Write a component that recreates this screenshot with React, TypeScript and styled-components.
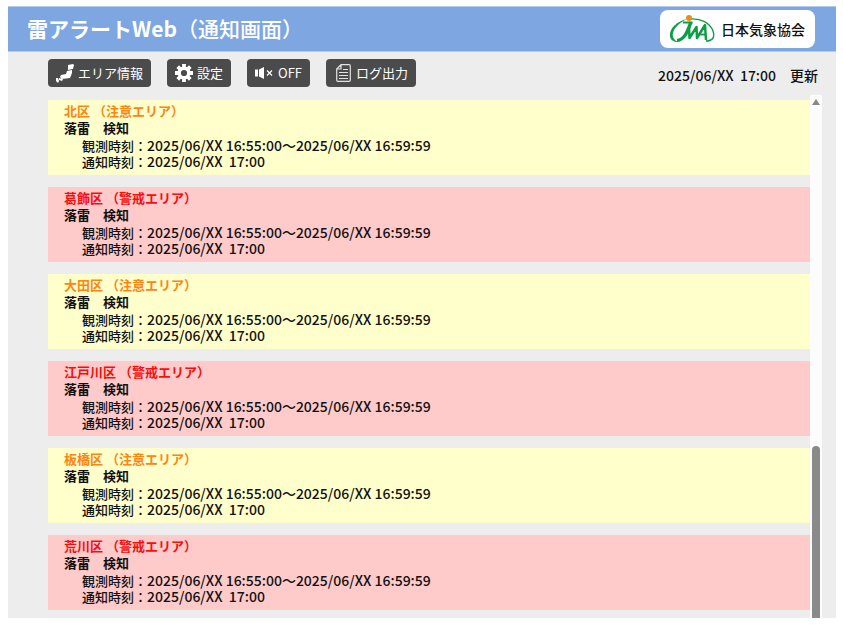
import React from "react";
import styled, { createGlobalStyle } from "styled-components";

const GlobalStyle = createGlobalStyle`
  * { box-sizing: border-box; }
  body {
    margin: 0;
    background: #fff;
    color: #111;
    font-family: "Noto Sans CJK JP", "Noto Sans", sans-serif;
    font-size: 13px;
    font-weight: 500;
  }
`;

const Page = styled.div`
  height: 100vh;
  padding: 6px 7px 9px 8px;
`;

const Screen = styled.main`
  height: 100%;
  display: flex;
  flex-direction: column;
  background: #ededed;
  overflow: hidden;
`;

const Header = styled.header`
  display: flex;
  flex: none;
  align-items: center;
  justify-content: space-between;
  height: 46px;
  padding: 0 21px 2px 19px;
  background: #7ea6e0;
  border-top: 1px solid #b4cbee;
  border-bottom: 1px solid #b4cbee;
`;

const Title = styled.h1`
  margin: 0;
  color: #fff;
  font-size: 21px;
  line-height: 30px;
  font-weight: 500;
  white-space: nowrap;
`;

const Product = styled.span`
  font-weight: 700;
`;

const Brand = styled.a`
  display: flex;
  align-items: center;
  gap: 5px;
  height: 38px;
  padding: 0 10px 0 9px;
  margin-top: 2px;
  border-radius: 8px;
  background: #fff;
  color: #111;
  font-size: 14px;
  text-decoration: none;
  white-space: nowrap;
`;

const Toolbar = styled.div`
  display: flex;
  flex: none;
  align-items: flex-start;
  justify-content: space-between;
  height: 43px;
  padding: 7px 18px 0 40px;
`;

const Buttons = styled.div`
  display: flex;
  gap: 16px;
`;

const ToolButton = styled.button<{ $inset?: boolean }>`
  display: flex;
  align-items: center;
  gap: ${(p) => (p.$inset ? 5 : 4)}px;
  height: 28px;
  padding: 0 8px 0 ${(p) => (p.$inset ? 10 : 8)}px;
  border: 0;
  border-radius: 4px;
  background: #4b4b4b;
  color: #fff;
  font: 400 13px/20px "Noto Sans CJK JP", sans-serif;
  white-space: nowrap;
  cursor: pointer;
`;

const Updated = styled.time`
  padding-top: 6px;
  font-size: 14px;
  line-height: 20px;
  white-space: pre;
`;

const Body = styled.div`
  display: flex;
  flex: 1;
  min-height: 0;
  padding: 0 14px 0 40px;
`;

const List = styled.ul`
  flex: 1;
  display: flex;
  flex-direction: column;
  gap: 12px;
  margin: 0;
  padding: 5px 0 0;
  list-style: none;
  overflow: hidden;
`;

type Level = "caution" | "warning";

const Card = styled.li<{ $level: Level }>`
  flex: none;
  height: 75px;
  padding: 3px 16px;
  background: ${(p) => (p.$level === "caution" ? "#ffffcb" : "#ffcaca")};
`;

const Area = styled.h2<{ $level: Level }>`
  margin: 0;
  color: ${(p) => (p.$level === "caution" ? "#ff8412" : "#f80d0d")};
  font-size: 13px;
  line-height: 16px;
  font-weight: 700;
`;

const Status = styled.p`
  margin: 0;
  line-height: 17px;
  font-weight: 700;
`;

const Times = styled.dl`
  margin: 0;
  padding: 1px 0 0 18px;
`;

const TimeRow = styled.div`
  display: flex;
  align-items: baseline;
  height: 16px;
  line-height: 16px;
  white-space: pre;
`;

const TimeLabel = styled.dt`
  margin: 0;
`;

const TimeValue = styled.dd`
  margin: 0;
  font-size: 14px;
`;

const Track = styled.div`
  display: flex;
  flex-direction: column;
  align-items: center;
  flex: none;
  width: 12px;
  background: #fcfcfc;
`;

const ScrollUp = styled.button`
  display: flex;
  justify-content: center;
  flex: none;
  width: 12px;
  height: 14px;
  padding: 4px 0 0;
  border: 0;
  background: none;
`;

const ThumbSpace = styled.div`
  flex: 337;
`;

const Thumb = styled.div`
  flex: 172;
  width: 8px;
  border-radius: 4px 4px 0 0;
  background: #8a8a8a;
`;

const JwaLogo = () => (
  <svg width="47" height="30" viewBox="0 0 47 30" aria-hidden="true">
    <path d="M9 28C-1 28-1 18 5 12C9 8 13 6 18 5C10 9 5 14 4 19C3 23 5 26 9 28z" fill="#0b9f45" />
    <g fill="none" stroke="#0b9f45" strokeLinejoin="round">
      <path d="M21 5C32 4 41 9 44 17C46 23 44 27 37 27" strokeWidth="1.4" />
      <path d="M22 8C19 16 16 26 8 26.5" strokeWidth="3.4" />
      <path d="M14 8.5H23.5" strokeWidth="2" />
      <path d="M20 13L20.5 24L27.5 13L28 24L36 11L37 26" strokeWidth="2.5" />
      <path d="M31 20.5H37" strokeWidth="1.8" />
    </g>
    <circle cx="20" cy="4" r="3" fill="#f08a1d" />
  </svg>
);

const MapIcon = () => (
  <svg width="18" height="19" viewBox="0 0 18 19" fill="#fff" aria-hidden="true">
    <path d="M12 1l5-1 1 1-1 4-5 1zM11 7l5-1v3l-2 5-8 1-2-2 1-2 5-1zM3 14l4 1-1 2-3-1zM0 14h2l1 3-1 2-2-2z" />
  </svg>
);

const GearIcon = () => (
  <svg width="18" height="18" viewBox="0 0 18 18" aria-hidden="true">
    <path d="M9 0V4M9 14V18M0 9H4M14 9H18M2.7 2.7L5.5 5.5M12.5 12.5L15.3 15.3M2.7 15.3L5.5 12.5M12.5 5.5L15.3 2.7" stroke="#fff" strokeWidth="3.8" />
    <circle cx="9" cy="9" r="4.8" fill="none" stroke="#fff" strokeWidth="3.4" />
  </svg>
);

const MuteIcon = () => (
  <svg width="19" height="12" viewBox="0 0 19 12" aria-hidden="true">
    <path d="M0 2.5h3v7H0zM4 2.5l5-2.5v12L4 9.5z" fill="#fff" />
    <path d="M12 3.5l5 5M17 3.5l-5 5" stroke="#fff" strokeWidth="1.2" />
  </svg>
);

const LogIcon = () => (
  <svg width="15" height="18" viewBox="0 0 15 18" fill="none" stroke="#e2e2e2" aria-hidden="true">
    <path d="M5 .7H13Q14.3.7 14.3 2V16Q14.3 17.3 13 17.3H2Q.7 17.3.7 16V5zM5 .7V5H.7" strokeWidth="1.2" />
    <path d="M7 5.5H12M3 8.5H12M3 11.5H12M3 14.5H12" />
  </svg>
);

const alerts: { area: string; level: Level }[] = [
  { area: "北区", level: "caution" },
  { area: "葛飾区", level: "warning" },
  { area: "大田区", level: "caution" },
  { area: "江戸川区", level: "warning" },
  { area: "板橋区", level: "caution" },
  { area: "荒川区", level: "warning" },
];

const levelNames = { caution: "注意エリア", warning: "警戒エリア" };

export default function App() {
  return (
    <Page>
      <GlobalStyle />
      <Screen>
        <Header>
          <Title><Product>雷アラートWeb</Product>（通知画面）</Title>
          <Brand href="#"><JwaLogo />日本気象協会</Brand>
        </Header>
        <Toolbar>
          <Buttons>
            <ToolButton type="button"><MapIcon />エリア情報</ToolButton>
            <ToolButton type="button"><GearIcon />設定</ToolButton>
            <ToolButton type="button"><MuteIcon />OFF</ToolButton>
            <ToolButton type="button" $inset><LogIcon />ログ出力</ToolButton>
          </Buttons>
          <Updated>{"2025/06/XX  17:00　更新"}</Updated>
        </Toolbar>
        <Body>
          <List>
            {alerts.map(({ area, level }) => (
              <Card key={area} $level={level}>
                <Area $level={level}>{area} （{levelNames[level]}）</Area>
                <Status>落雷　検知</Status>
                <Times>
                  <TimeRow>
                    <TimeLabel>観測時刻：</TimeLabel>
                    <TimeValue>2025/06/XX 16:55:00～2025/06/XX 16:59:59</TimeValue>
                  </TimeRow>
                  <TimeRow>
                    <TimeLabel>通知時刻：</TimeLabel>
                    <TimeValue>{"2025/06/XX  17:00"}</TimeValue>
                  </TimeRow>
                </Times>
              </Card>
            ))}
          </List>
          <Track>
            <ScrollUp type="button" aria-label="上へスクロール">
              <svg width="8" height="6" viewBox="0 0 8 6" aria-hidden="true"><path d="M4 0L8 6H0z" fill="#888" /></svg>
            </ScrollUp>
            <ThumbSpace />
            <Thumb />
          </Track>
        </Body>
      </Screen>
    </Page>
  );
}
